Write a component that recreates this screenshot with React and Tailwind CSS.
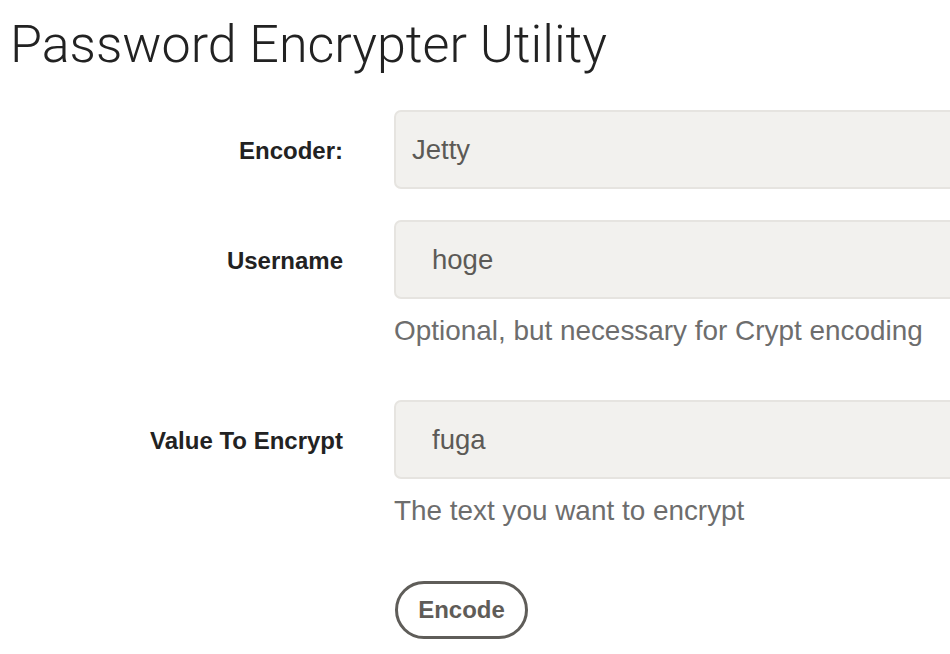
import React from "react";

const labelCls =
  "w-[343px] shrink-0 pt-[3px] text-right text-[24px] font-bold text-[#222222]";
const boxCls =
  "ml-[51px] w-[620px] shrink-0 h-[79px] rounded-[7px] border-2 border-[#e6e4e0] bg-[#f2f1ee] text-[27.5px] text-[#5c5a56] outline-none";
const helpCls = "ml-[394px] mt-[16px] text-[27.9px] leading-[31px] text-[#6d6d6d]";

export default function App() {
  return (
    <div className="w-screen h-screen overflow-hidden bg-white font-['Liberation_Sans',Arial,sans-serif]">
      <h1 className="pl-[10px] pt-[19px] text-[52px] leading-[52px] font-light text-[#222222] font-['Roboto',sans-serif]">
        Password Encrypter Utility
      </h1>

      <form className="mt-[39px]" onSubmit={(e) => e.preventDefault()}>
        {/* Encoder */}
        <div className="flex items-center">
          <label className={labelCls}>Encoder:</label>
          <div className={boxCls + " flex items-center pl-[16px]"}>Jetty</div>
        </div>

        {/* Username */}
        <div className="flex items-center mt-[31px]">
          <label className={labelCls}>Username</label>
          <input
            type="text"
            defaultValue="hoge"
            className={boxCls + " pl-[36px]"}
          />
        </div>
        <p className={helpCls}>Optional, but necessary for Crypt encoding</p>

        {/* Value */}
        <div className="flex items-center mt-[54px]">
          <label className={labelCls}>Value To Encrypt</label>
          <input
            type="text"
            defaultValue="fuga"
            className={boxCls + " pl-[36px]"}
          />
        </div>
        <p className={helpCls}>The text you want to encrypt</p>

        <button
          type="submit"
          className="ml-[395px] mt-[55px] h-[58px] w-[133px] rounded-full border-[3px] border-[#5f5d59] bg-white text-[24px] font-bold text-[#5f5c58]"
        >
          Encode
        </button>
      </form>
    </div>
  );
}
